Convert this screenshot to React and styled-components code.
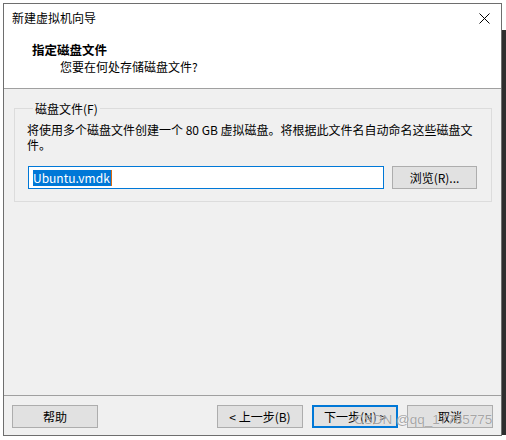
import styled, { createGlobalStyle } from "styled-components";

const GlobalStyle = createGlobalStyle`
  html, body {
    margin: 0;
    padding: 0;
    background: #ffffff;
  }
  body {
    font-family: "Noto Sans CJK SC", "Noto Sans", sans-serif;
    font-size: 12px;
    color: #000;
  }
`;

const Desktop = styled.div`
  position: relative;
  width: 506px;
  height: 440px;
  display: flex;
  align-items: flex-start;
  background: #ffffff;
  overflow: hidden;
`;

const Window = styled.div`
  margin: 3px 0 0 3px;
  width: 499px;
  height: 433px;
  box-sizing: border-box;
  border: 1px solid #6e6e6e;
  background: #f0f0f0;
  display: flex;
  flex-direction: column;
`;

const DarkEdge = styled.div`
  flex: 1;
  margin-top: 30px;
  height: 405px;
  background: #2e2e2e;
`;

const TitleBar = styled.div`
  height: 28px;
  background: #ffffff;
  display: flex;
  align-items: center;
  justify-content: space-between;
  padding: 0 10px 0 8px;
  font-size: 12px;
  line-height: 16px;
`;

const CloseButton = styled.svg`
  display: block;
  width: 11px;
  height: 11px;
  margin-right: 1px;
`;

const Header = styled.div`
  background: #ffffff;
  border-bottom: 1px solid #a0a0a0;
  padding: 9px 0 13px 28px;
  display: flex;
  flex-direction: column;
`;

const HeaderTitle = styled.div`
  font-weight: 700;
  font-size: 12.5px;
  line-height: 17px;
`;

const HeaderSub = styled.div`
  padding-left: 28px;
  line-height: 17px;
`;

const Body = styled.div`
  flex: 1;
  padding: 11px 9px 0 10px;
`;

const Group = styled.fieldset`
  margin: 0;
  padding: 5px 14px 12px 12px;
  border: 1px solid #dcdcdc;
`;

const GroupLabel = styled.legend`
  margin-left: 6px;
  padding: 0 2px;
  line-height: 17px;
`;

const Description = styled.p`
  margin: 0;
  line-height: 15px;
`;

const PathRow = styled.div`
  display: flex;
  align-items: flex-start;
  gap: 8px;
  margin-top: 14px;
  padding-left: 1px;
`;

const PathInput = styled.div`
  width: 356px;
  height: 23px;
  box-sizing: border-box;
  border: 1px solid #0078d7;
  background: #ffffff;
  display: flex;
  align-items: center;
  padding-left: 4px;
`;

const Selected = styled.span`
  background: #0078d7;
  color: #ffffff;
  line-height: 16px;
  padding: 0 1px 0 0;
  border-right: 1px solid #d66a12;
`;

const Button = styled.button`
  width: ${(p) => p.$width || 86}px;
  height: 23px;
  box-sizing: border-box;
  margin: 0;
  padding: 0;
  font-family: inherit;
  font-size: 12px;
  color: #000;
  background: #e1e1e1;
  border: ${(p) => (p.$primary ? "2px solid #0078d7" : "1px solid #adadad")};
`;

const Footer = styled.div`
  border-top: 1px solid #a0a0a0;
  padding: 9px 8px 7px 8px;
  display: flex;
  align-items: center;
`;

const Spacer = styled.div`
  flex: 1;
`;

const ButtonGroup = styled.div`
  display: flex;
  gap: 9px;
`;

const Watermark = styled.div`
  position: absolute;
  left: 354px;
  top: 412px;
  white-space: nowrap;
  font-family: "Liberation Sans", Arial, sans-serif;
  font-size: 13.5px;
  line-height: 16px;
  color: rgba(130, 130, 130, 0.7);
  text-shadow: 0 0 1px rgba(255, 255, 255, 0.9);
  pointer-events: none;
`;

const App = () => {
  return (
    <Desktop>
      <GlobalStyle />
      <Window>
        <TitleBar>
          <span>新建虚拟机向导</span>
          <CloseButton viewBox="0 0 11 11">
            <path d="M0.5 0.5 L10.5 10.5 M10.5 0.5 L0.5 10.5" stroke="#000" strokeWidth="1" fill="none" />
          </CloseButton>
        </TitleBar>
        <Header>
          <HeaderTitle>指定磁盘文件</HeaderTitle>
          <HeaderSub>您要在何处存储磁盘文件?</HeaderSub>
        </Header>
        <Body>
          <Group>
            <GroupLabel>磁盘文件(F)</GroupLabel>
            <Description>
              将使用多个磁盘文件创建一个 80 GB 虚拟磁盘。将根据此文件名自动命名这些磁盘文件。
            </Description>
            <PathRow>
              <PathInput>
                <Selected>Ubuntu.vmdk</Selected>
              </PathInput>
              <Button $width={85}>浏览(R)...</Button>
            </PathRow>
          </Group>
        </Body>
        <Footer>
          <Button>帮助</Button>
          <Spacer />
          <ButtonGroup>
            <Button>&lt; 上一步(B)</Button>
            <Button $primary>下一步(N) &gt;</Button>
            <Button>取消</Button>
          </ButtonGroup>
        </Footer>
      </Window>
      <DarkEdge />
      <Watermark>CSDN @qq_17785775</Watermark>
    </Desktop>
  );
};

export default App;
